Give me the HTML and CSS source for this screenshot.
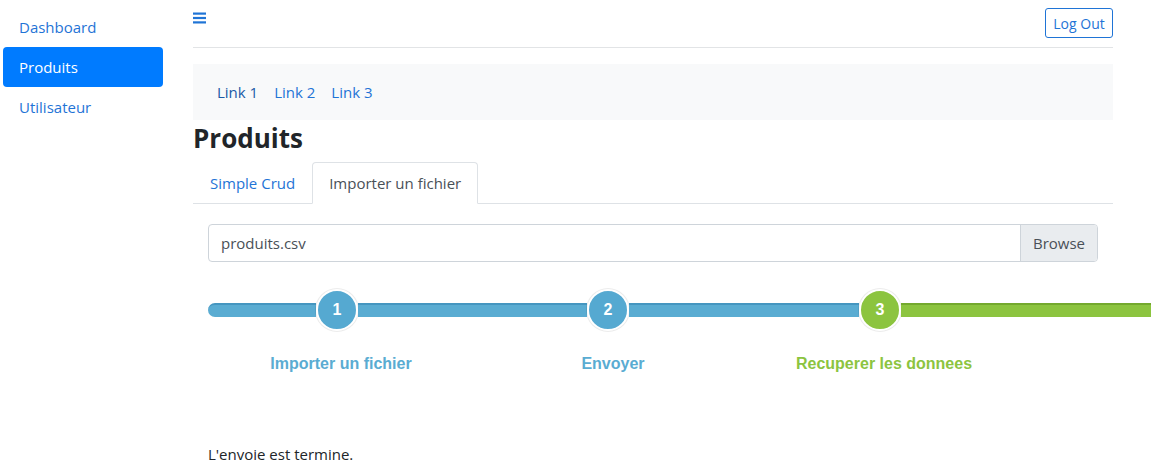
FILE: index.html
```html
<!DOCTYPE html>
<html lang="fr">
<head>
<meta charset="utf-8">
<title>Produits</title>
<link rel="stylesheet" href="styles.css">
</head>
<body>
<div class="layout">
  <aside class="sidebar">
    <a class="side-link" href="#">Dashboard</a>
    <a class="side-link active" href="#">Produits</a>
    <a class="side-link" href="#">Utilisateur</a>
  </aside>
  <main class="main">
    <header class="topbar">
      <button class="burger" aria-label="menu">
        <svg width="13" height="12" viewBox="0 0 13 12"><rect x="0" y="0.5" width="13" height="2.2" fill="#1f74d6"/><rect x="0" y="4.9" width="13" height="2.2" fill="#1f74d6"/><rect x="0" y="9.3" width="13" height="2.2" fill="#1f74d6"/></svg>
      </button>
      <button class="logout">Log Out</button>
    </header>
    <nav class="linkbar">
      <a class="nav-link current" href="#">Link 1</a>
      <a class="nav-link" href="#">Link 2</a>
      <a class="nav-link" href="#">Link 3</a>
    </nav>
    <h2 class="title">Produits</h2>
    <div class="tabs">
      <a class="tab" href="#">Simple Crud</a>
      <a class="tab active" href="#">Importer un fichier</a>
    </div>
    <section class="pane">
      <div class="file">
        <span class="file-name">produits.csv</span>
        <span class="browse">Browse</span>
      </div>
      <div class="stepper">
        <div class="track">
          <span class="bar blue first" style="width:108px"></span>
          <span class="dot blue">1</span>
          <span class="bar blue" style="width:229px"></span>
          <span class="dot blue">2</span>
          <span class="bar blue" style="width:230px"></span>
          <span class="dot green">3</span>
          <span class="bar green" style="width:250px"></span>
        </div>
        <div class="labels">
          <span class="label blue-t" style="width:266px">Importer un fichier</span>
          <span class="label blue-t" style="width:278px">Envoyer</span>
          <span class="label green-t" style="width:264px">Recuperer les donnees</span>
        </div>
      </div>
      <p class="done">L'envoie est termine.</p>
    </section>
  </main>
</div>
</body>
</html>
```

FILE: styles.css
```css
* { box-sizing: border-box; }
html, body { margin: 0; padding: 0; background: #fff; }
body {
  font-family: "Open Sans", "Noto Sans", sans-serif;
  font-size: 15px;
  color: #212529;
}
a { text-decoration: none; }

.layout { display: flex; align-items: flex-start; }

.sidebar {
  width: 160px;
  margin: 7px 0 0 3px;
  display: flex;
  flex-direction: column;
}
.side-link {
  display: block;
  height: 40px;
  line-height: 40px;
  padding: 0 16px;
  color: #1f74d6;
  border-radius: 4px;
}
.side-link.active { background: #007bff; color: #fff; }

.main { width: 920px; margin-left: 30px; }

.topbar {
  height: 48px;
  border-bottom: 1px solid #e2e4e6;
  display: flex;
  justify-content: space-between;
  align-items: flex-start;
}
.burger {
  border: 0; background: none; padding: 0; margin-top: 12px;
  width: 13px; height: 12px; display: block;
}
.burger svg { display: block; }
.logout {
  margin-top: 8px;
  height: 30px;
  width: 68px;
  padding: 0;
  font-family: inherit;
  font-size: 14px;
  color: #1f74d6;
  background: #fff;
  border: 1px solid #1f74d6;
  border-radius: 3px;
}

.linkbar {
  margin-top: 16px;
  height: 56px;
  background: #f8f9fa;
  display: flex;
  align-items: center;
  padding: 0 16px;
}
.nav-link { padding: 0 8px; color: #1f74d6; }
.nav-link.current { color: #1a5aa6; }

.title {
  margin: 0 0 8px;
  height: 34px;
  line-height: 36px;
  font-size: 26px;
  font-weight: 700;
  color: #212529;
}

.tabs {
  display: flex;
  border-bottom: 1px solid #dee2e6;
  height: 42px;
}
.tab {
  height: 42px;
  line-height: 40px;
  padding: 0 16px;
  color: #1f74d6;
  border: 1px solid transparent;
  border-radius: 4px 4px 0 0;
  margin-bottom: -1px;
}
.tab.active {
  color: #495057;
  background: #fff;
  border-color: #dee2e6 #dee2e6 #fff;
}

.pane { padding: 20px 15px 0; }

.file {
  height: 38px;
  border: 1px solid #ced4da;
  border-radius: 4px;
  display: flex;
  align-items: stretch;
  overflow: hidden;
}
.file-name { flex: 1; padding: 0 12px; line-height: 36px; color: #495057; }
.browse {
  width: 77px;
  text-align: center;
  line-height: 36px;
  background: #e9ecef;
  border-left: 1px solid #ced4da;
  color: #495057;
}

.stepper { width: 943px; margin-top: 27px; }
.track { display: flex; align-items: center; height: 42px; }
.bar { display: block; height: 14px; }
.bar.blue { background: #5aacd2; border-top: 2px solid #4596c0; }
.bar.green { background: #8cc43f; border-top: 2px solid #74a92e; }
.bar.first { border-radius: 7px 0 0 7px; }
.dot {
  width: 42px; height: 42px;
  border-radius: 50%;
  border: 2px solid #fff;
  box-shadow: 0 0 0 1px rgba(0,0,0,0.08);
  color: #fff;
  font-family: "Liberation Sans", Arial, sans-serif;
  font-weight: 700;
  font-size: 16px;
  display: flex; align-items: center; justify-content: center;
  flex: none;
}
.dot.blue { background: #55a9d1; }
.dot.green { background: #8cc43f; }

.labels { display: flex; margin-top: 22px; }
.label {
  display: block;
  text-align: center;
  font-family: "Liberation Sans", Arial, sans-serif;
  font-weight: 700;
  font-size: 16px;
  line-height: 22px;
}
.blue-t { color: #5aacd2; }
.green-t { color: #8cc43f; }

.done { margin: 68px 0 0; font-size: 15px; color: #212529; line-height: 22px; }
```
